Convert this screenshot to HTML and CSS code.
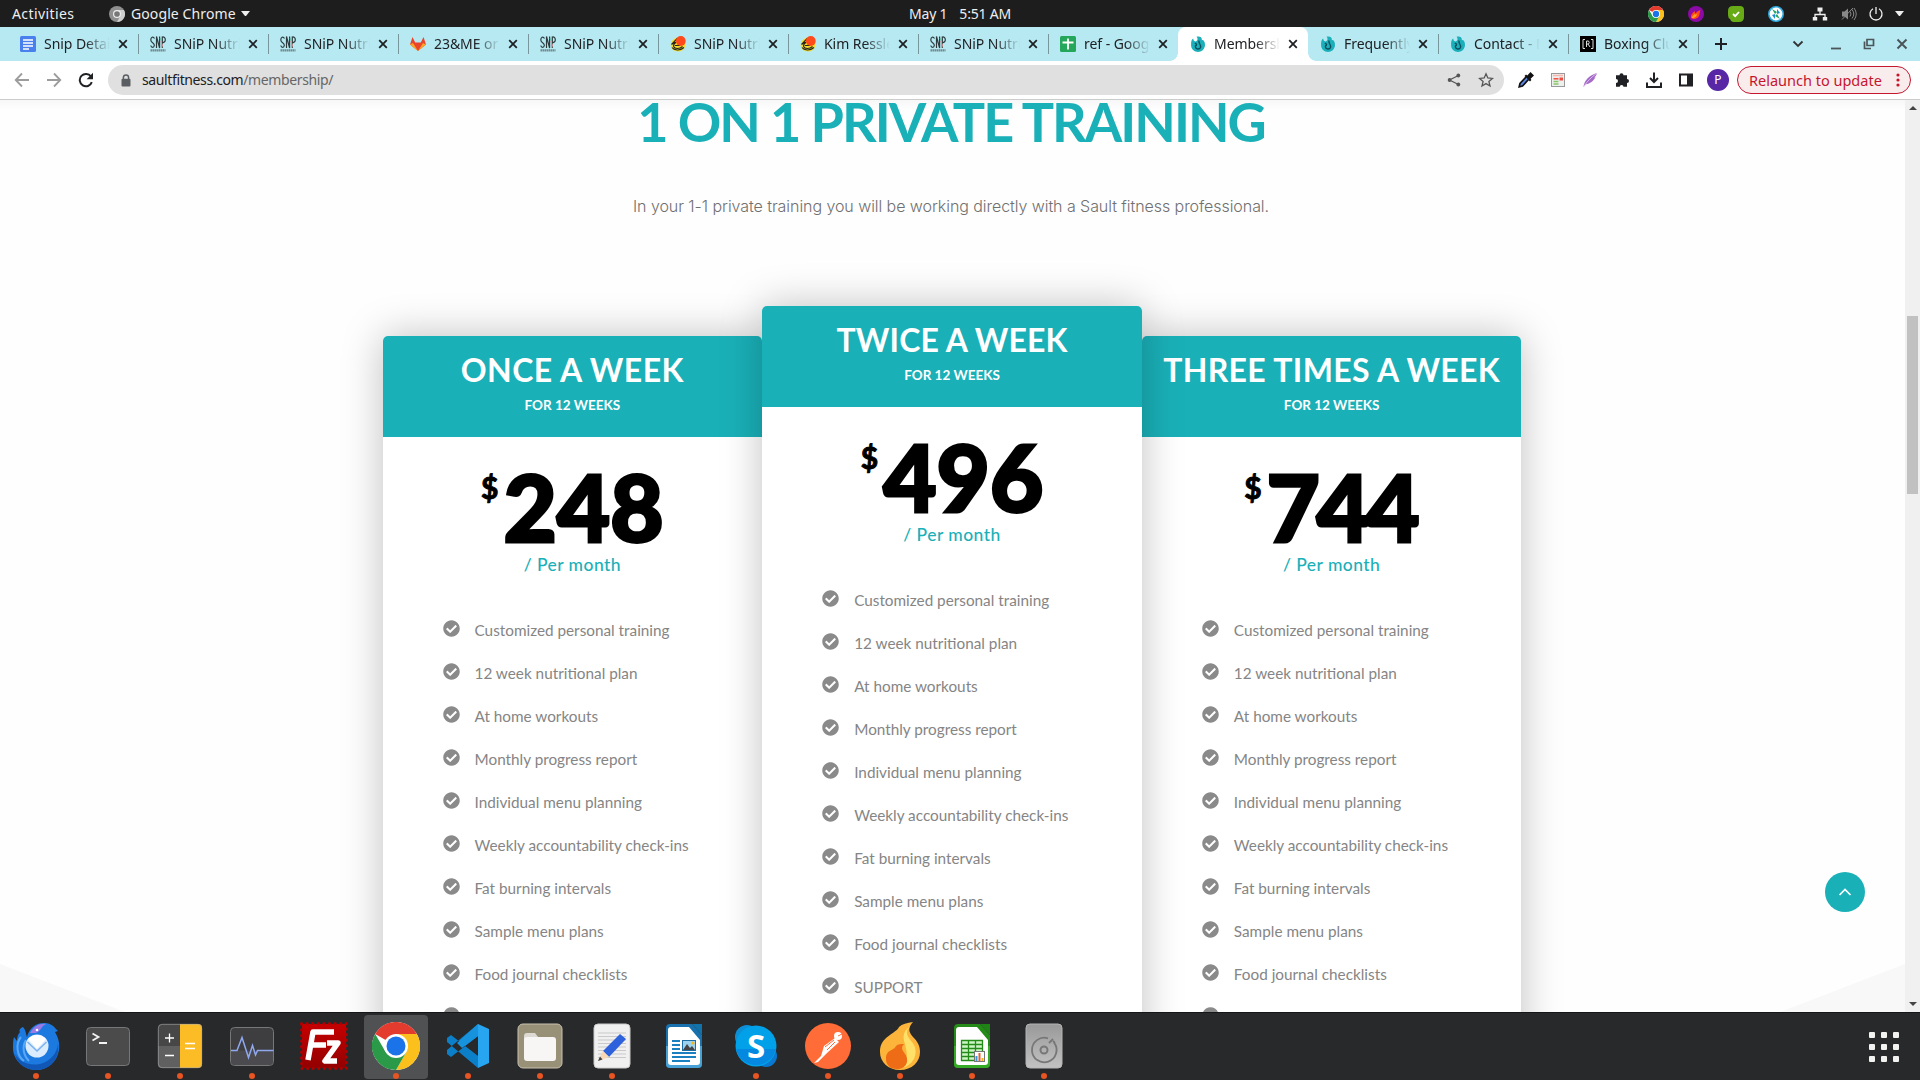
FILE: index.html
```html
<!DOCTYPE html>
<html lang="en">
<head>
<meta charset="utf-8">
<title>Membership - Sault Fitness</title>
<link rel="stylesheet" href="styles.css">
</head>
<body>
<svg class="defs" width="0" height="0">
  <symbol id="x" viewBox="0 0 10 10"><path d="M1.2 1.2l7.6 7.6M8.8 1.2L1.2 8.8" stroke="#202124" stroke-width="1.8" fill="none"/></symbol>
  <symbol id="tick" viewBox="0 0 512 512"><path fill="#8a8a8a" d="M504 256c0 137-111 248-248 248S8 393 8 256 119 8 256 8s248 111 248 248zM227 387l184-184c6-6 6-16 0-23l-22-22c-7-7-17-7-23 0L216 308l-70-70c-6-6-16-6-23 0l-22 23c-7 6-7 16 0 22l104 104c6 7 16 7 22 0z"/></symbol>
  <symbol id="snp" viewBox="0 0 16 16"><path d="M4.500 2.500C3 0 .8 1 .8 4 1 7 4.500 6.500 4.300 9.500 4 12 1.200 12 .8 9.500M6.500 12V.5L9.600 12V.5M12.300 12V.5M12.300 1c4-.8 4 6 0 5.500" stroke="#2d3b3f" stroke-width="1.200" fill="none"/><path d="M10.500 5l2 4-1 3" stroke="#d99a9a" fill="none"/><path d="M10 2l1.500 3" stroke="#63c3a0" fill="none"/><path d="M.5 14.300h15" stroke="#72898d" stroke-width="2.200" stroke-dasharray="1.600 .4"/></symbol>
  <symbol id="hot" viewBox="0 0 16 16"><path d="M8 1.500C3 2 .6 6 .8 9.500 1.200 13.500 4 15.400 8 15.400s7-2.400 7-6V6z" fill="#f5dc29"/><path d="M7.500 2.200L1.500 8.500C3 7 4.500 6.400 6 6.200c-2 1.300-2.800 3-2.300 4.600.8 2 5.800 2.600 8.800-.3M2 11.500c2 3 8 3.500 12 0M5 9.500h5" stroke="#222" stroke-width="1.100" fill="none"/><circle cx="10.800" cy="5" r="4.900" fill="#ff4a1c"/></symbol>
  <symbol id="flame" viewBox="0 0 16 16"><path d="M6.500.8C10-.5 12.500 1.800 11.700 4.200 14 3.500 15.500 7 14.800 10.500 14 14 11.500 15.900 8 15.900S1.600 13.500 1.200 10.500C.7 6.500 1.500 3 3.200 2.500c.2 2 1 3 2.600 3C7.500 5 8.300 2.500 6.500.8z" fill="#1bafba"/><path d="M9 4.500c-1 3 2.500 4 1.500 7-.8 2-4.500 2-5-.4C5.200 9.500 6 9 7 9M5 7l2 1.800" fill="none" stroke="#0d4c5c" stroke-width="1.400"/></symbol>
  <symbol id="chrome" viewBox="0 0 48 48"><circle cx="24" cy="24" r="24" fill="#fff"/><path d="M24 24L3.200 12A24 24 0 0 1 44.800 12z" fill="#e33b2e"/><path d="M24 24V12h20.800A24 24 0 0 1 24 48L34.400 30z" fill="#fcc01c"/><path d="M24 24l10.400 6L24 48A24 24 0 0 1 3.200 12l10.400 18z" fill="#2a9a48"/><circle cx="24" cy="24" r="12" fill="#fff"/><circle cx="24" cy="24" r="9.500" fill="#1a73e8"/></symbol>
</svg>

<header class="topbar">
  <span class="activities">Activities</span>
  <svg class="app-icon" width="16" height="16" viewBox="0 0 48 48"><circle cx="24" cy="24" r="24" fill="#8f8f8f"/><path d="M24 12h20.800A24 24 0 0 1 24 48l10-18z" fill="#cfcfcf"/><circle cx="24" cy="24" r="12" fill="#eee"/><circle cx="24" cy="24" r="8.500" fill="#777"/></svg>
  <span class="app-name">Google Chrome</span>
  <i class="caret"></i>
  <span class="clock"><span>May 1</span><span>5:51 AM</span></span>
  <div class="tray">
    <svg width="16" height="16"><use href="#chrome"/></svg>
    <svg width="16" height="16" viewBox="0 0 16 16"><circle cx="8" cy="8" r="8" fill="#8c0aa5"/><path d="M3 12c-.5-3 1-5 4-7-.3 1.500 0 2 .5 2.500C8.500 6 10 5 12.500 4c-1 2-.3 3-1.300 5.500C10 12.500 6 14 3 12z" fill="#ff4b17"/><path d="M4 12c0-2 2-3.500 3-4 .5 1 1 1 2-.5 0 2.500-2 4.500-5 4.500z" fill="#ffa51f"/></svg>
    <svg width="16" height="16" viewBox="0 0 16 16"><path d="M0 5Q0 0 5 0h7q4 0 4 4v7q0 5-5 5H5q-2 0-3-3-2-1-2-4z" fill="#68ab16"/><path d="M5 8l2.200 2.200L11 6" stroke="#fff" stroke-width="1.800" fill="none"/></svg>
    <svg width="16" height="16" viewBox="0 0 16 16"><circle cx="8" cy="8" r="7.200" fill="#fff" stroke="#2da8e0" stroke-width="1.600"/><path d="M4 3l5 3-2 2zM12 13L7 10l2-2z" fill="#20a85c"/><path d="M9 3l3 4-3 1zM7 13L4 9l3-1z" fill="#1b8fcf"/></svg>
    <svg class="net" width="16" height="16" viewBox="0 0 16 16"><path d="M8 4v4M3 12V8.500h10V12" stroke="#eee" stroke-width="1.300" fill="none"/><path d="M5.500 1.500h5v4h-5zM.8 11h4.400v3.500H.8zM10.800 11h4.400v3.500h-4.400z" fill="#eee"/></svg>
    <svg class="vol" width="16" height="16" viewBox="0 0 16 16"><path d="M1 5.500h2.500L7 2.500v11l-3.500-3H1z" fill="#888"/><path d="M9 5.500q2 2.500 0 5M11 3.500q3.500 4.500 0 9M13 2q4.500 6 0 12M1 13.500L12 2" stroke="#888" fill="none"/></svg>
    <svg class="pow" width="16" height="16" viewBox="0 0 16 16"><path d="M5 2.800a6 6 0 1 0 6 0M8 1v7" stroke="#eee" stroke-width="1.300" fill="none"/></svg>
    <i class="caret"></i>
  </div>
</header>

<nav class="tabs">
  <div class="tab"><svg class="fav" viewBox="0 0 16 16"><rect width="16" height="16" rx="1.500" fill="#4a80ee"/><path d="M3 4h10M3 7h10M3 10h10M3 13h6" stroke="#fff" stroke-width="1.500"/></svg><span>Snip Detail</span><svg class="x"><use href="#x"/></svg></div>
  <div class="tab"><svg class="fav"><use href="#snp"/></svg><span>SNiP Nutrig</span><svg class="x"><use href="#x"/></svg></div>
  <div class="tab"><svg class="fav"><use href="#snp"/></svg><span>SNiP Nutrig</span><svg class="x"><use href="#x"/></svg></div>
  <div class="tab"><svg class="fav" viewBox="0 0 16 16"><path d="M2.500 1L0 8.500l8 6.500 8-6.500L13.500 1l-2.700 5.500H5.200z" fill="#e8452c"/><path d="M0 8.500L8 15l8-6.500-3-1.500L8 15 3 7z" fill="#fca326"/></svg><span>23&amp;ME or A</span><svg class="x"><use href="#x"/></svg></div>
  <div class="tab"><svg class="fav"><use href="#snp"/></svg><span>SNiP Nutrig</span><svg class="x"><use href="#x"/></svg></div>
  <div class="tab"><svg class="fav"><use href="#hot"/></svg><span>SNiP Nutrig</span><svg class="x"><use href="#x"/></svg></div>
  <div class="tab"><svg class="fav"><use href="#hot"/></svg><span>Kim Ressler</span><svg class="x"><use href="#x"/></svg></div>
  <div class="tab"><svg class="fav"><use href="#snp"/></svg><span>SNiP Nutrig</span><svg class="x"><use href="#x"/></svg></div>
  <div class="tab last"><svg class="fav" viewBox="0 0 16 16"><rect width="16" height="16" rx="1.500" fill="#25a75b"/><path d="M8 2.500v11M2.500 6.500h11" stroke="#fff" stroke-width="1.800"/></svg><span>ref - Google</span><svg class="x"><use href="#x"/></svg></div>
  <div class="tab active"><svg class="fav"><use href="#flame"/></svg><span>Membership</span><svg class="x"><use href="#x"/></svg></div>
  <div class="tab"><svg class="fav"><use href="#flame"/></svg><span>Frequently</span><svg class="x"><use href="#x"/></svg></div>
  <div class="tab"><svg class="fav"><use href="#flame"/></svg><span>Contact - M</span><svg class="x"><use href="#x"/></svg></div>
  <div class="tab"><svg class="fav" viewBox="0 0 16 16"><rect width="16" height="16" fill="#000"/><path d="M5 3.500H3v9h2M11 3.500h2v9h-2M6.500 11V5h2q1.500 1.500 0 3h-2M8 8l2 3" stroke="#ddd" fill="none"/></svg><span>Boxing Club</span><svg class="x"><use href="#x"/></svg></div>
  <svg class="plus" width="14" height="14" viewBox="0 0 14 14"><path d="M7 1v12M1 7h12" stroke="#202124" stroke-width="2"/></svg>
  <div class="window-controls">
    <svg width="12" height="12" viewBox="0 0 12 12"><path d="M1.500 3.500L6 8l4.500-4.500" stroke="#333" stroke-width="1.800" fill="none"/></svg>
    <svg class="min" width="12" height="12" viewBox="0 0 12 12"><path d="M1 10.500h10" stroke="#4b5658" stroke-width="1.800"/></svg>
    <svg width="12" height="12" viewBox="0 0 12 12"><path d="M4 1.500h6.500v6H4zM1.500 3.500V10.500H8" stroke="#4b5658" stroke-width="1.700" fill="none"/></svg>
    <svg width="12" height="12" viewBox="0 0 12 12"><path d="M1.500 1.500l9 9M10.500 1.500l-9 9" stroke="#4b5658" stroke-width="2"/></svg>
  </div>
</nav>

<div class="toolbar">
  <div class="history">
    <svg viewBox="0 0 16 16"><path d="M15 8H2M8 1.500L1.700 8 8 14.500" stroke="#9c9c9c" stroke-width="1.800" fill="none"/></svg>
    <svg viewBox="0 0 16 16"><path d="M1 8h13M8 1.500L14.300 8 8 14.500" stroke="#9c9c9c" stroke-width="1.800" fill="none"/></svg>
    <svg viewBox="0 0 16 16"><path d="M13.800 10.200A6.200 6.200 0 1 1 13 4.500" stroke="#202124" stroke-width="2" fill="none"/><path d="M15 .8v6.400H8.600z" fill="#202124"/></svg>
  </div>
  <div class="omnibox">
    <svg class="lock" width="10" height="13" viewBox="0 0 10 13"><path d="M2.400 5.500V3.500a2.600 2.600 0 0 1 5.200 0v2" stroke="#5a5e62" stroke-width="1.500" fill="none"/><rect y="4.800" x=".5" width="9" height="7.800" rx="1" fill="#5a5e62"/></svg>
    <span class="url">saultfitness.com<em>/membership/</em></span>
    <svg class="share" width="14" height="14" viewBox="0 0 14 14"><path d="M11.500 2.500L2.500 7l9 4.500" stroke="#555" stroke-width="1.300" fill="none"/><g fill="#555"><circle cx="11.300" cy="2.500" r="1.900"/><circle cx="2.600" cy="7" r="1.900"/><circle cx="11.300" cy="11.500" r="1.900"/></g></svg>
    <svg width="16" height="16" viewBox="0 0 16 16"><path d="M8 1.800l1.800 4.200 4.700.4-3.600 3 1.100 4.600L8 11.600 4 14l1.100-4.600-3.600-3L6.200 6z" stroke="#555" stroke-width="1.300" fill="none"/></svg>
  </div>
  <div class="extensions">
    <svg viewBox="0 0 16 16"><path d="M8 5L2 11.500l-.8 3.300L4.500 14l6-6.500" fill="#5a86e8" stroke="#111" stroke-width="1.700"/><path d="M6.500 4l5.500 5.500 1.400-1.400-.8-1.300L16 3.500 12.500 0 9.300 3.500 8 2.600z" fill="#111"/></svg>
    <svg viewBox="0 0 16 16"><rect x="1.500" y="1.500" width="13" height="13" fill="#eef0ee" stroke="#999"/><path d="M3 3.500h10" stroke="#f8b5ae" stroke-width="1.500"/><path d="M3.500 6.800h5" stroke="#f04b3e" stroke-width="1.500"/><path d="M3.500 9.500h5M3.500 12h5" stroke="#8bc66d" stroke-width="1.300"/><path d="M9.500 7h3.500" stroke="#f04b3e" stroke-width="3"/></svg>
    <svg viewBox="0 0 16 16"><path d="M1.500 15C2 9 7 3 15 1c-.5 2-1.500 3.500-3 4.500l1.500-.2C11.500 9 8 12 4 12.200z" fill="#a56bc9"/><path d="M1.500 15C5 9.500 9 5.500 15 1" stroke="#e6cbf3" stroke-width=".8" fill="none"/></svg>
    <svg viewBox="0 0 16 16"><path d="M5.500 3.200a2 2 0 0 1 4 0H13V7a2 2 0 0 1 0 4v3.800H9.500a1.900 1.900 0 0 0-3.800 0H2V11a2 2 0 0 0 0-4V3.200z" fill="#202124"/></svg>
    <svg viewBox="0 0 16 16"><path d="M8 .5v9M4 6l4 4 4-4M1 10.500V15h14v-4.500" stroke="#202124" stroke-width="2" fill="none"/></svg>
    <svg viewBox="0 0 16 16"><path d="M1 1.500h14v13H1zM3 3.500v9h6v-9z" fill="#202124" fill-rule="evenodd"/></svg>
  </div>
  <span class="avatar">P</span>
  <div class="relaunch"><span>Relaunch to update</span><svg width="4" height="14" viewBox="0 0 4 14" fill="#c5162e"><circle cx="2" cy="2" r="1.600"/><circle cx="2" cy="7" r="1.600"/><circle cx="2" cy="12" r="1.600"/></svg></div>
</div>

<div class="viewport">
  <main class="page">
    <h1>1 ON 1 PRIVATE TRAINING</h1>
    <p class="intro">In your 1-1 private training you will be working directly with a Sault fitness professional.</p>
    <section class="plans">
      <article class="plan">
        <header><h2 class="once">ONCE A WEEK</h2><h3>FOR 12 WEEKS</h3></header>
        <div class="price"><sup>$</sup><b>248</b></div>
        <div class="per">/ Per month</div>
        <ul>
          <li><svg><use href="#tick"/></svg><span>Customized personal training</span></li>
          <li><svg><use href="#tick"/></svg><span>12 week nutritional plan</span></li>
          <li><svg><use href="#tick"/></svg><span>At home workouts</span></li>
          <li><svg><use href="#tick"/></svg><span>Monthly progress report</span></li>
          <li><svg><use href="#tick"/></svg><span>Individual menu planning</span></li>
          <li><svg><use href="#tick"/></svg><span>Weekly accountability check-ins</span></li>
          <li><svg><use href="#tick"/></svg><span>Fat burning intervals</span></li>
          <li><svg><use href="#tick"/></svg><span>Sample menu plans</span></li>
          <li><svg><use href="#tick"/></svg><span>Food journal checklists</span></li>
          <li><svg><use href="#tick"/></svg><span>SUPPORT</span></li>
        </ul>
      </article>
      <article class="plan featured">
        <header><h2 class="twice">TWICE A WEEK</h2><h3>FOR 12 WEEKS</h3></header>
        <div class="price"><sup>$</sup><b>496</b></div>
        <div class="per">/ Per month</div>
        <ul>
          <li><svg><use href="#tick"/></svg><span>Customized personal training</span></li>
          <li><svg><use href="#tick"/></svg><span>12 week nutritional plan</span></li>
          <li><svg><use href="#tick"/></svg><span>At home workouts</span></li>
          <li><svg><use href="#tick"/></svg><span>Monthly progress report</span></li>
          <li><svg><use href="#tick"/></svg><span>Individual menu planning</span></li>
          <li><svg><use href="#tick"/></svg><span>Weekly accountability check-ins</span></li>
          <li><svg><use href="#tick"/></svg><span>Fat burning intervals</span></li>
          <li><svg><use href="#tick"/></svg><span>Sample menu plans</span></li>
          <li><svg><use href="#tick"/></svg><span>Food journal checklists</span></li>
          <li><svg><use href="#tick"/></svg><span>SUPPORT</span></li>
        </ul>
      </article>
      <article class="plan">
        <header><h2 class="thrice">THREE TIMES A WEEK</h2><h3>FOR 12 WEEKS</h3></header>
        <div class="price narrow"><sup>$</sup><b>744</b></div>
        <div class="per">/ Per month</div>
        <ul>
          <li><svg><use href="#tick"/></svg><span>Customized personal training</span></li>
          <li><svg><use href="#tick"/></svg><span>12 week nutritional plan</span></li>
          <li><svg><use href="#tick"/></svg><span>At home workouts</span></li>
          <li><svg><use href="#tick"/></svg><span>Monthly progress report</span></li>
          <li><svg><use href="#tick"/></svg><span>Individual menu planning</span></li>
          <li><svg><use href="#tick"/></svg><span>Weekly accountability check-ins</span></li>
          <li><svg><use href="#tick"/></svg><span>Fat burning intervals</span></li>
          <li><svg><use href="#tick"/></svg><span>Sample menu plans</span></li>
          <li><svg><use href="#tick"/></svg><span>Food journal checklists</span></li>
          <li><svg><use href="#tick"/></svg><span>SUPPORT</span></li>
        </ul>
      </article>
    </section>
    <a class="to-top"><svg width="14" height="8" viewBox="0 0 14 8"><path d="M1.500 7L7 1.500 12.500 7" stroke="#fff" stroke-width="1.700" fill="none"/></svg></a>
  </main>
  <div class="scrollbar"><i class="up"></i><i class="thumb"></i><i class="down"></i></div>
</div>

<footer class="dock">
  <div class="app run"><svg viewBox="0 0 48 48"><path d="M8 10C6 8 10 5 11 5c3 3 3 8 4 10 2-8 8-14 17-14 5-.5 9 2 12 6l2 2-3 1c3 5 5 11 4 18-2 12-11 20-23 20S1 38 1 26c0-4 0-8 1-11l3 4c0-4 1-7 3-9z" fill="#1b79e0"/><path d="M3 32c5 9 17 13 28 9 8-3 14-10 15-19 2 15-8 26-22 26C14 48 5 42 3 32z" fill="#1158b6"/><path d="M9 15C3 22 5 34 12 39M14 18C10 24 11 33 17 39" stroke="#58a8f8" stroke-width="2" fill="none"/><path d="M18 11C22 4 28 1 34 2c-5 2-5 8-11 9z" fill="#9a7ae6"/><circle cx="25" cy="24" r="11.500" fill="#dcecff"/><path d="M16 17l9 10 9-10q-9-8-18 0z" fill="#fff"/><path d="M15.500 20l9.500 9 9.500-9" stroke="#7ab2ef" stroke-width="1.500" fill="none"/><circle cx="25" cy="8" r="1.300" fill="#fff"/></svg></div>
  <div class="app run"><svg viewBox="0 0 48 48"><rect x="2.500" y="5.500" width="43" height="38" rx="4" fill="#4b4b4b" stroke="#777"/><path d="M8.500 11.500l6 3.500-6 3.500M15 21h8" stroke="#f3f3f3" stroke-width="1.800" fill="none"/></svg></div>
  <div class="app run"><svg viewBox="0 0 48 48"><rect x="2" y="2" width="44" height="44" rx="4" fill="#474747"/><path d="M2 24h22v22H6q-4 0-4-4z" fill="#606060"/><path d="M24 2h18q4 0 4 4v36q0 4-4 4H24z" fill="#fcbc26"/><rect x="2.300" y="2.300" width="43.400" height="43.400" rx="4" fill="none" stroke="#aaa" stroke-opacity=".6"/><path d="M13.500 11.500v9M9 16h9M9 33.500h9M29 21.500h10M29 26.500h10" stroke="#fff" stroke-width="1.300"/></svg></div>
  <div class="app run"><svg viewBox="0 0 48 48"><rect x="2.500" y="5.500" width="43" height="38" rx="4" fill="#3e3e40" stroke="#777"/><path d="M3 28.500h42V39q0 4-4 4H7q-4 0-4-4z" fill="#4b4b4f"/><path d="M3 28.500h6l5-13 6.500 20 4-12 3 9.500 2-4.500h16" stroke="#8fa8ef" stroke-width="1.500" fill="none"/></svg></div>
  <div class="app"><svg viewBox="0 0 48 48"><defs><linearGradient id="stamp" x2="0" y2="1"><stop stop-color="#c60000"/><stop offset="1" stop-color="#930000"/></linearGradient></defs><rect x="2" y="2" width="44" height="44" fill="url(#stamp)"/><rect x="1.500" y="1.500" width="45" height="45" fill="none" stroke="#b00000" stroke-width="3" stroke-dasharray=".1 5.500" stroke-linecap="round"/><path d="M8 38L13 10h21M11 23h15M27 21h11L25 39h12" stroke="#fff" stroke-width="5.500" fill="none" stroke-linejoin="round"/></svg></div>
  <div class="app run current"><svg><use href="#chrome"/></svg></div>
  <div class="app run"><svg viewBox="0 0 48 48"><path d="M34 2L45 7v34l-11 5z" fill="#27a5f1"/><path d="M34 2v12L7 35 3 32v-4zM34 46V34L7 13l-4 3v4z" fill="#0c7fc9"/><path d="M34 2v12L18 26l-5-5z" fill="#1793dd"/></svg></div>
  <div class="app run"><svg viewBox="0 0 48 48"><rect x="2" y="2" width="44" height="44" rx="5" fill="#999078" stroke="#c9c2b0"/><path d="M8 14q0-3 3-3h8l3 4h15v8H8z" fill="#dcdad2"/><rect x="8" y="15" width="32" height="24" rx="3" fill="#f7f6f4"/></svg></div>
  <div class="app run"><svg viewBox="0 0 48 48"><rect x="6" y="2" width="36" height="44" rx="4" fill="#f0f0f0" stroke="#ccc"/><path d="M10 11h28M10 14.500h28M10 18h28M10 21.500h28M10 25h28M10 28.500h28M10 32h28M10 35.500h28" stroke="#c9c9c9"/><path d="M32 12l6 5-17 18-6-6z" fill="#2e61dc"/><path d="M15 29l6 6-11 4z" fill="#f7d7b5"/><path d="M12 34.500l2.500 3L10 39z" fill="#444"/></svg></div>
  <div class="app"><svg viewBox="0 0 48 48"><path d="M10 2h22l10 11v29q0 4-4 4H10q-4 0-4-4V6q0-4 4-4z" fill="#1870ad"/><path d="M6 24h36v18q0 4-4 4H10q-4 0-4-4z" fill="#48a1d5"/><path d="M11 5h18l11 13v22q0 3-3 3H11q-3 0-3-3V8q0-3 3-3z" fill="#fff"/><path d="M32 2h10v11z" fill="#1272aa"/><path d="M12 19h8M12 23h8M12 27h8M12 31h24M12 35h24M12 39h18" stroke="#1b80bf" stroke-width="1.800"/><rect x="22.500" y="18.500" width="13" height="10" fill="#9dd2ed" stroke="#1b6ea5"/><path d="M23 28l4-6 3 4 2-2 3 4z" fill="#444"/><circle cx="33" cy="21" r="1.500" fill="#fab619"/></svg></div>
  <div class="app run"><svg viewBox="0 0 48 48"><circle cx="15" cy="15" r="12" fill="#0d8ed5"/><circle cx="34" cy="34" r="11" fill="#0a78cf"/><circle cx="24" cy="24" r="20.500" fill="#00a1e8"/><path d="M4 27a20.500 20.500 0 0 0 40 0z" fill="#0588df"/><text class="skype-s" x="24" y="36" text-anchor="middle">S</text></svg></div>
  <div class="app run"><svg viewBox="0 0 48 48"><circle cx="24" cy="24" r="23" fill="#ff6c37"/><circle cx="34" cy="14" r="4" fill="#fff"/><path d="M31 16l4 4-12 11-9 9-4 1 7-7 3-10z" fill="#fff"/><path d="M21 25l9-7M23 28l8-8M34 14l4-2" stroke="#ff6c37" stroke-width="1"/></svg></div>
  <div class="app run"><svg viewBox="0 0 48 48"><path d="M37 0c-5 6-5 9 0 15 4 4 7 8 7 15 0 10-8 18-20 18S4 40 4 30C4 14 20 12 23 5c3-3 8-4 14-5z" fill="#fcb53a"/><path d="M34 5c-6 5-2 10 2 15 8 10 2 23-10 26 8-8 4-18 3-24C26 14 28 8 34 5z" fill="#ffe169"/><path d="M28 22c-4 4-1 7 1 10 5 7 1 15-8 15-7 0-11-4-11-10 0-10 8-8 10-13 2-2 5-2 8-2z" fill="#ee6c16"/></svg></div>
  <div class="app run"><svg viewBox="0 0 48 48"><path d="M10 2h22l10 11v29q0 4-4 4H10q-4 0-4-4V6q0-4 4-4z" fill="#248b18"/><path d="M6 24h36v18q0 4-4 4H10q-4 0-4-4z" fill="#35aa26"/><path d="M11 5h18l11 13v22q0 3-3 3H11q-3 0-3-3V8q0-3 3-3z" fill="#fff"/><path d="M32 2h10v11z" fill="#208316"/><path d="M13.500 18.500h21v20h-21zM13.500 22.500h21M13.500 26.500h21M13.500 30.500h21M13.500 34.500h21M20.500 18.500v20M27.500 18.500v20" fill="#ccf4c6" stroke="#248b18" stroke-width="1.300"/><rect x="26.500" y="29.500" width="10" height="10" fill="#fff" stroke="#777"/><path d="M28.500 39v-5" stroke="#3498db" stroke-width="2"/><path d="M31.500 39v-8" stroke="#e7602f" stroke-width="2"/><path d="M34.500 39v-3" stroke="#fbb117" stroke-width="2"/></svg></div>
  <div class="app run"><svg viewBox="0 0 48 48"><defs><linearGradient id="disk" x2="0" y2="1"><stop stop-color="#999"/><stop offset="1" stop-color="#c2c2c2"/></linearGradient></defs><rect x="6" y="2" width="36" height="44" rx="4" fill="url(#disk)" stroke="#b5b5b5"/><path d="M34 20.500A12.300 12.300 0 1 1 28 16.300M29 21l4-4M35 21l-2-2" stroke="#777" stroke-width="1.800" fill="none"/><circle cx="24" cy="28" r="3.500" fill="none" stroke="#777" stroke-width="2"/></svg></div>
  <div class="grid-menu"><i></i><i></i><i></i><i></i><i></i><i></i><i></i><i></i><i></i></div>
</footer>
</body>
</html>
```
FILE: styles.css
```css
* { box-sizing: border-box; margin: 0; padding: 0; }
body {
  width: 1920px; height: 1080px; overflow: hidden;
  display: flex; flex-direction: column;
  font-family: "Noto Sans", sans-serif; font-size: 14.5px; background: #fefefe;
}
svg { display: block; flex: none; }
.defs { position: absolute; }

/* desktop top bar */
.topbar { height: 27px; background: #1d1d1d; color: #eee; display: grid; grid-template-columns: 97px 34px 103px 20px 1fr auto; align-items: center; padding-left: 12px; font-size: 14px; }
.activities { letter-spacing: .4px; }
.app-name { white-space: nowrap; margin-left: -12px; letter-spacing: .1px; }
.caret { border: 4.500px solid transparent; border-top: 5px solid #eee; border-bottom: 0; width: 9px; }
.topbar > .caret { margin-left: -5px; }
.clock { display: flex; gap: 12px; margin-left: 643px; white-space: nowrap; letter-spacing: -.2px; }
.tray { display: flex; align-items: center; gap: 24px; padding-right: 16px; }
.tray .net { margin-left: 4px; }
.tray .vol { margin-left: -11px; }
.tray .pow { margin-left: -13px; }
.tray .caret { margin-left: -13px; }

/* tab strip */
.tabs { height: 34px; background: #b6e9f2; display: flex; align-items: center; padding-left: 8px; }
.tab { width: 130px; height: 34px; flex: none; display: flex; align-items: center; padding-left: 12px; position: relative; }
.tab::after { content: ""; position: absolute; right: -1px; top: 7px; width: 1px; height: 20px; background: #77979d; }
.tab.last::after, .tab.active::after { display: none; }
.tab .fav { width: 16px; height: 16px; }
.tab span { width: 66px; margin-left: 8px; margin-top: -1px; overflow: hidden; white-space: nowrap; color: #202124; font-size: 14px; letter-spacing: -.05px; mask-image: linear-gradient(90deg, #000 62%, transparent 100%); }
.tab .x { width: 10px; height: 10px; margin-left: 7.500px; }
.tab.active { background: #fff; border-radius: 8px 8px 0 0; z-index: 1; }
.tab.active::before { content: ""; position: absolute; left: -8px; right: -8px; bottom: 0; height: 8px; background: radial-gradient(circle at 0 0, transparent 7.500px, #fff 8px) left / 8px 8px no-repeat, radial-gradient(circle at 100% 0, transparent 7.500px, #fff 8px) right / 8px 8px no-repeat; }
.plus { margin-left: 16px; }
.window-controls { display: flex; margin-left: auto; padding-right: 12px; gap: 21px; }
.window-controls svg:first-child { margin-right: 5px; }

/* toolbar */
.toolbar { height: 39px; background: #fff; border-bottom: 1px solid #cbcccc; display: flex; align-items: center; }
.history { display: flex; gap: 16px; padding-left: 14px; width: 108px; }
.history svg { width: 16px; height: 16px; }
.omnibox { width: 1396px; height: 30px; border-radius: 15px; background: #e0e0e0; display: flex; align-items: center; padding: 0 10px 0 13px; }
.url { margin-left: 11px; margin-top: -1px; color: #202124; font-size: 14px; letter-spacing: -.38px; }
.url em { font-style: normal; color: #666; }
.share { margin-left: auto; margin-right: 17px; }
.extensions { display: flex; gap: 16px; margin-left: 14px; }
.extensions svg { width: 16px; height: 16px; }
.avatar { width: 22px; height: 22px; border-radius: 50%; background: #5727a5; color: #fff; font-size: 12px; line-height: 22px; text-align: center; margin-left: 13px; }
.relaunch { margin-left: 8px; width: 174px; height: 28px; border: 1px solid #c5162e; border-radius: 14px; background: #f9ecec; color: #c5162e; display: flex; align-items: center; padding-left: 11px; gap: 13px; white-space: nowrap; }
.relaunch span { width: 134px; margin-top: -1px; }

/* web page */
.viewport { height: 912px; display: flex; overflow: hidden; }
.page { width: 1905px; position: relative; overflow: hidden; text-align: center; font-family: Lato, sans-serif; background: linear-gradient(#f7f7f7, #fefefe 10px); z-index: 0; }
.page::before { content: ""; position: absolute; z-index: -1; left: 0; right: 0; bottom: 0; height: 48px; background: #f8f8f8; clip-path: polygon(0 0, 125px 100%, 1780px 100%, 100% 0, 100% 100%, 0 100%); }
h1 { color: #1ab0b8; font-size: 54px; line-height: 44px; font-weight: 700; letter-spacing: -2px; white-space: nowrap; padding-right: 3px; }
.intro { margin-top: 49px; font: 300 16px/26px Inter, sans-serif; color: #707070; letter-spacing: -.06px; padding-right: 3px; }
.plans { display: flex; justify-content: center; align-items: flex-start; margin-top: 87px; padding-right: 1px; }
.plan { width: 379.670px; height: 900px; margin-top: 30px; background: #fff; border-radius: 5px 5px 0 0; box-shadow: 0 0 40px rgba(0, 0, 0, .25); }
.plan.featured { margin-top: 0; position: relative; z-index: 1; }
.plan header { height: 101px; background: #1ab0b8; border-radius: 5px 5px 0 0; color: #fff; padding-top: 16px; white-space: nowrap; }
h2 { font-size: 32px; line-height: 35px; font-weight: 700; }
.once { letter-spacing: .5px; }
.twice { letter-spacing: .1px; }
.thrice { letter-spacing: .35px; }
h3 { font-size: 13.500px; line-height: 30px; font-weight: 700; margin-top: 3px; }
.price { display: flex; justify-content: center; padding-top: 23.500px; gap: 5px; color: #000; height: 116px; }
.price sup { font-size: 30px; line-height: 36px; margin-top: 8px; font-weight: 700; -webkit-text-stroke: 1px #000; }
.price b { font-size: 92px; line-height: 92px; font-weight: 900; -webkit-text-stroke: 3px #000; }
.price.narrow { padding-right: 3px; }
.price.narrow b { letter-spacing: -3.500px; }
.per { color: #1ab0b8; font-size: 17.500px; line-height: 23px; font-weight: 500; letter-spacing: .45px; }
.plan ul { list-style: none; margin-top: 31px; padding-left: 60px; }
.plan li { height: 43px; display: flex; align-items: center; gap: 15px; color: #858585; font-size: 15.300px; letter-spacing: 0; }
.plan li svg { width: 17px; height: 17px; }
.plan li span { padding-top: 2px; }
.to-top { position: absolute; left: 1825px; top: 772px; width: 40px; height: 40px; border-radius: 50%; background: #1ab0b8; display: grid; place-items: center; }
.scrollbar { width: 15px; background: #f0f0f0; display: flex; flex-direction: column; align-items: center; padding: 6px 0; }
.scrollbar i { display: block; flex: none; }
.up { border: 4px solid transparent; border-bottom-color: #444; border-top: 0; }
.thumb { width: 11px; height: 178px; background: #c1c1c1; margin-top: 206px; }
.down { border: 4px solid transparent; border-top-color: #444; border-bottom: 0; margin-top: auto; }

/* dock */
.dock { height: 68px; background: #28292b; border-top: 1px solid #151617; display: flex; align-items: center; }
.app { width: 72px; height: 64px; display: flex; justify-content: center; padding-top: 7px; position: relative; }
.app svg { width: 48px; height: 48px; }
.app.current { width: 64px; margin: 0 4px; background: #505153; border-radius: 4px; }
.run::after { content: ""; position: absolute; left: 50%; bottom: 0; width: 6px; height: 6px; margin-left: -3px; border-radius: 50%; background: #e95420; }
.skype-s { font: 700 33px "Open Sans", sans-serif; fill: #fff; }
.grid-menu { margin-left: auto; margin-right: 21px; display: grid; grid-template-columns: repeat(3, 6px); gap: 6px; }
.grid-menu i { width: 6px; height: 6px; border-radius: 1px; background: #f2f2f0; }
```
